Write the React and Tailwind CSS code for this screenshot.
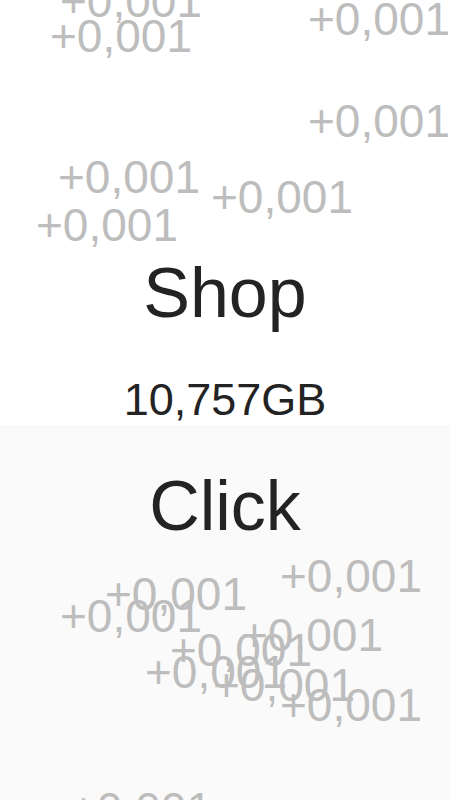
import React from "react";

const floaters = [
  [60, -22],
  [50, 13],
  [308, -4],
  [308, 98],
  [58, 154],
  [211, 174],
  [36, 202],
  [280, 553],
  [105, 571],
  [60, 593],
  [241, 612],
  [170, 627],
  [145, 649],
  [213, 662],
  [280, 682],
  [70, 786],
];

export default function App() {
  return (
    <div
      className="relative w-full h-[800px] overflow-hidden flex flex-col bg-white text-[#232323]"
      style={{ fontFamily: '"Liberation Sans", Arial, sans-serif' }}
    >
      <div className="h-[425px] flex flex-col items-center justify-end pb-[3px] bg-white">
        <div className="text-[70px] leading-none mb-[49px]">Shop</div>
        <div className="text-[45px] leading-none">10,757GB</div>
      </div>
      <div className="flex-1 bg-[#fafafa] flex flex-col items-center pt-[46px]">
        <div className="text-[70px] leading-none">Click</div>
      </div>
      {floaters.map(([x, y], i) => (
        <div
          key={i}
          className="absolute text-[46px] leading-none text-[#bdbdbd] whitespace-nowrap pointer-events-none"
          style={{ left: x, top: y }}
        >
          +0,001
        </div>
      ))}
    </div>
  );
}
